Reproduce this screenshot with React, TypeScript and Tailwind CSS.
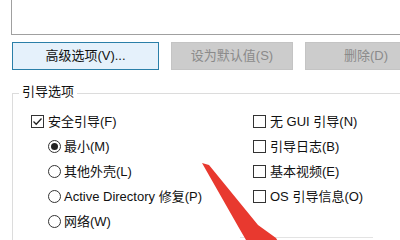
import React from "react";

const font = { fontFamily: '"Liberation Sans", "Noto Sans CJK SC", sans-serif' };

const CheckBox = ({ checked, label }: { checked?: boolean; label: string }) => (
    <div className="flex items-center h-[25px] gap-[4px]">
        <div className="w-[13px] h-[13px] border border-[#333] bg-white flex items-center justify-center shrink-0">
            {checked && (
                <svg width="11" height="11" viewBox="0 0 11 11">
                    <path d="M1.5 5.5 L4.2 8.2 L9.5 2.5" fill="none" stroke="#222" strokeWidth="1.3" />
                </svg>
            )}
        </div>
        <span className="whitespace-nowrap">{label}</span>
    </div>
);

const Radio = ({ checked, label }: { checked?: boolean; label: string }) => (
    <div className="flex items-center h-[25px] gap-[3px] pl-[17px]">
        <div className="w-[13px] h-[13px] rounded-full border border-[#333] bg-white flex items-center justify-center shrink-0">
            {checked && <div className="w-[7px] h-[7px] rounded-full bg-[#222]" />}
        </div>
        <span className="whitespace-nowrap">{label}</span>
    </div>
);

export default function App() {
    return (
        <div className="relative w-[400px] h-[240px] overflow-hidden bg-white text-[13px] text-[#111]" style={font}>
            {/* list box above, cut off by the window top */}
            <div className="ml-[11px] w-[420px] h-[35px] border-l border-b border-[#a0a0a0] bg-white" />

            <div className="flex gap-[12px] pl-[12px] mt-[7px] h-[28px]">
                <button className="w-[147px] shrink-0 border border-[#2a7fa8] bg-[#e5f1fb] text-[#111]">
                    高级选项(V)...
                </button>
                <button disabled className="w-[122px] shrink-0 border border-[#c4c4c4] bg-[#cccccc] text-[#8a8a8a]">
                    设为默认值(S)
                </button>
                <button disabled className="w-[122px] shrink-0 border border-[#c4c4c4] bg-[#cccccc] text-[#8a8a8a]">
                    删除(D)
                </button>
            </div>

            <div className="relative ml-[12px] mt-[23px] w-[420px] h-[160px] border-t border-l border-[#dcdcdc]">
                <span className="absolute left-[6px] top-[-12px] px-[3px] bg-white leading-[20px]">引导选项</span>
                <div className="grid grid-cols-[222px_1fr] pl-[18px] pt-[15px]">
                    <div className="flex flex-col">
                        <CheckBox checked label="安全引导(F)" />
                        <Radio checked label="最小(M)" />
                        <Radio label="其他外壳(L)" />
                        <Radio label="Active Directory 修复(P)" />
                        <Radio label="网络(W)" />
                    </div>
                    <div className="flex flex-col">
                        <CheckBox label="无 GUI 引导(N)" />
                        <CheckBox label="引导日志(B)" />
                        <CheckBox label="基本视频(E)" />
                        <CheckBox label="OS 引导信息(O)" />
                        <div className="ml-[-13px] mt-[28px] w-[133px] border-t border-[#e3e3e3]" />
                    </div>
                </div>
            </div>

            {/* red annotation arrow */}
            <svg className="absolute inset-0 pointer-events-none" width="400" height="240" viewBox="0 0 400 240">
                <polygon
                    points="202,163 209,165 258,225 276,238 284,252 240,252 246,240 239,228"
                    fill="#e8392f"
                />
            </svg>
        </div>
    );
}
